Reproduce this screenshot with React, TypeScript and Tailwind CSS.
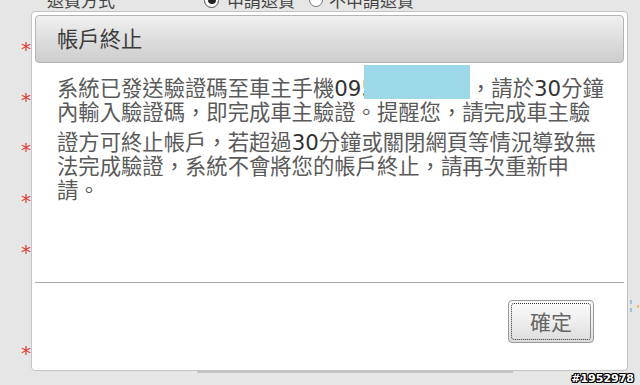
import React from "react";

const digit = "inline-block pt-[10px] leading-[20px] font-['DejaVu_Sans',sans-serif] text-[#333]";

export default function App() {
  const stars = [true, true, true, true, true, false, true];
  return (
    <div className="relative w-[640px] h-[385px] overflow-hidden bg-[#e6e6e6] font-['Noto_Sans_CJK_TC','Noto_Sans_CJK_SC',sans-serif]">
      {/* page behind the dialog */}
      <div className="flex items-center h-[24px] -mt-[12px] text-[17px] text-[#444]">
        <span className="ml-[47px]">退費方式</span>
        <span className="ml-[89px] flex items-center">
          <span className="w-[15px] h-[15px] rounded-full border border-[#555] bg-white flex items-center justify-center">
            <span className="w-[8px] h-[8px] rounded-full bg-[#222]" />
          </span>
          <span className="ml-[8px]">申請退貨</span>
        </span>
        <span className="ml-[14px] flex items-center">
          <span className="w-[14px] h-[14px] rounded-full border border-[#777] bg-white" />
          <span className="ml-[6px]">不申請退貨</span>
        </span>
      </div>
      <div className="flex flex-col pl-[21px] pt-[27px]">
        {stars.map((s, i) => (
          <div key={i} className="h-[50.7px] text-[20px] leading-[20px] text-[#e03c3c] font-['DejaVu_Sans',sans-serif]">
            {s ? "*" : ""}
          </div>
        ))}
      </div>
      <div className="absolute left-[630px] top-[300px] w-[2px] h-[4px] bg-[#9cc4e0]" />
      <div className="absolute left-[630px] top-[308px] w-[2px] h-[4px] bg-[#9cc4e0]" />
      <div className="absolute left-[637px] top-[305px] w-[2px] h-[3px] bg-[#f0c070]" />

      {/* shadow fragment under dialog */}
      <div className="absolute left-[197px] top-[371px] w-[316px] h-[2px] bg-[#c4c4c4]" />

      {/* dialog */}
      <div className="absolute left-[31px] top-[11px] w-[597px] h-[360px] bg-white border border-[#c4c4c4] rounded-[4px] p-[3px] flex flex-col">
        <div className="h-[48px] shrink-0 rounded-[4px] border border-[#b4b4b4] bg-gradient-to-b from-[#f0f0f0] to-[#cdcdcd] flex items-center pl-[21px]">
          <span className="text-[21.33px] text-[#3c3c3c] leading-none -mt-[3px]">帳戶終止</span>
        </div>
        <div className="flex-1">
          <p className="pl-[22px] pr-[18px] pt-[2px] text-[21.33px] leading-[24px] text-[#5a5a5a]">
            系統已發送驗證碼至車主手機<span className={digit}>095</span>
            <span className="inline-block w-[106px] h-[34px] -ml-[11px] align-[-3px] bg-[#9dd8e9]" />
            ，請於<span className={digit}>30</span>分鐘內輸入驗證碼，即完成車主驗證。提醒您，請完成車主驗證方可終止帳戶，若超過<span className={digit}>30</span>分鐘或關閉網頁等情況導致無法完成驗證，系統不會將您的帳戶終止，請再次重新申請。
          </p>
        </div>
        <div className="h-[85px] shrink-0 border-t border-[#aaa] flex justify-end items-start pt-[17px] pr-[30px]">
          <button className="w-[86px] h-[43px] rounded-[4px] border border-[#999] bg-gradient-to-b from-[#fbfbfb] via-[#eeeeee] to-[#dcdcdc] p-[2px]">
            <span className="w-full h-full rounded-[3px] border border-dotted border-[#333] flex items-center justify-center text-[21px] text-[#666]">
              確定
            </span>
          </button>
        </div>
      </div>

      <div className="absolute right-[6px] bottom-[1px] text-[11px] leading-none font-bold text-white font-['DejaVu_Sans',sans-serif] [text-shadow:1px_0_0_#000,-1px_0_0_#000,0_1px_0_#000,0_-1px_0_#000,1px_1px_0_#000,-1px_-1px_0_#000,1px_-1px_0_#000,-1px_1px_0_#000]">
        #1952978
      </div>
    </div>
  );
}
